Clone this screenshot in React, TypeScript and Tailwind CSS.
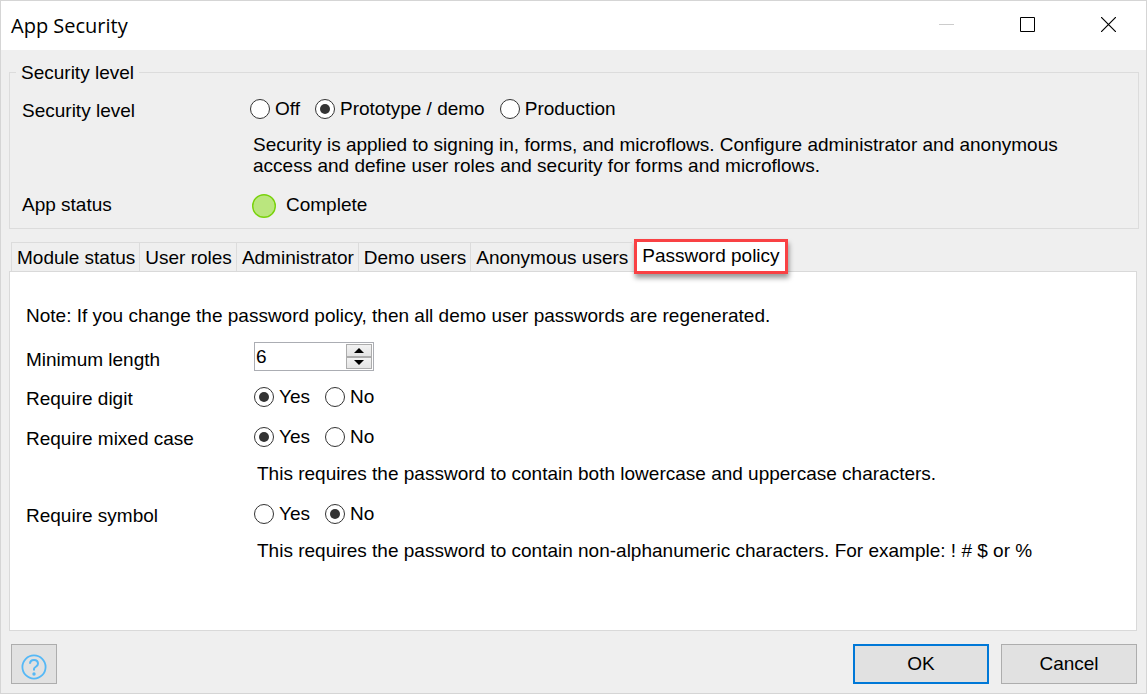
import { useState } from "react";
import type { ReactNode } from "react";

function Radio({ name, label, checked, onSelect }: { name: string; label: string; checked: boolean; onSelect: () => void }) {
  return (
    <label className="flex items-center gap-[5px]">
      <input
        type="radio"
        name={name}
        checked={checked}
        onChange={onSelect}
        className="grid size-5 shrink-0 appearance-none place-content-center rounded-full border border-[#333] bg-white before:size-2.5 before:rounded-full checked:before:bg-[#333]"
      />
      {label}
    </label>
  );
}

function RadioGroup({ name, label, options, initial }: { name: string; label: string; options: string[]; initial: string }) {
  const [value, setValue] = useState(initial);
  return (
    <div role="radiogroup" aria-label={label} className="flex h-[22px] items-center gap-[15px]">
      {options.map((o) => (
        <Radio key={o} name={name} label={o} checked={value === o} onSelect={() => setValue(o)} />
      ))}
    </div>
  );
}

function Row({ label, children, className = "" }: { label: ReactNode; children: ReactNode; className?: string }) {
  return (
    <div className={`grid grid-cols-[228px_minmax(0,1fr)] ${className}`}>
      <div className="pt-0.5">{label}</div>
      <div>{children}</div>
    </div>
  );
}

function LengthField() {
  const [value, setValue] = useState(6);
  const step = "flex flex-1 items-center justify-center border border-[#acacac] bg-linear-to-b from-[#f2f2f2] to-[#e4e4e4]";
  return (
    <div className="flex h-[29px] w-[120px] border border-[#abadb3] bg-white p-px">
      <input
        id="min-length"
        type="number"
        value={value}
        onChange={(e) => setValue(Number(e.target.value))}
        className="min-w-0 flex-1 appearance-none outline-none [-moz-appearance:textfield] [&::-webkit-inner-spin-button]:appearance-none"
      />
      <div className="flex w-[26px] flex-col">
        <button type="button" aria-label="Increase" className={step} onClick={() => setValue(value + 1)}>
          <svg width="10" height="5" viewBox="0 0 10 5"><path d="M0 5 5 0l5 5z" /></svg>
        </button>
        <button type="button" aria-label="Decrease" className={step} onClick={() => setValue(Math.max(0, value - 1))}>
          <svg width="10" height="5" viewBox="0 0 10 5"><path d="M0 0h10L5 5z" /></svg>
        </button>
      </div>
    </div>
  );
}

const tabs = ["Module status", "User roles", "Administrator", "Demo users", "Anonymous users"];
const caption = "flex h-8 w-16 items-center justify-center";

export default function App() {
  return (
    <div className="flex min-h-screen flex-col border border-[#d5d5d5] bg-[#efefef] font-['Liberation_Sans',Arial,sans-serif] text-[19px] leading-[22px] text-black">
      <header className="flex h-[49px] items-center justify-between bg-white pr-1.5 pl-2.5">
        <h1 className="font-['Open_Sans','Noto_Sans',sans-serif] text-[20px]">App Security</h1>
        <div className="mb-0.5 flex gap-[17px]">
          <button type="button" aria-label="Minimize" disabled className={caption}>
            <svg width="15" height="15" viewBox="0 0 15 15"><path d="M0 7.5h15" stroke="#ccc" /></svg>
          </button>
          <button type="button" aria-label="Maximize" className={caption}>
            <svg width="15" height="15" viewBox="0 0 15 15"><path d="M.5.5h14v14H.5z" fill="none" stroke="#000" /></svg>
          </button>
          <button type="button" aria-label="Close" className={caption}>
            <svg width="15" height="15" viewBox="0 0 15 15"><path d="m0 0 15 15M15 0 0 15" stroke="#000" strokeWidth="1.2" /></svg>
          </button>
        </div>
      </header>

      <main className="flex flex-1 flex-col pt-2.5 pr-[7px] pl-2">
        <fieldset className="border border-[#dcdcdc] px-3 pb-2.5">
          <legend className="-ml-1.5 px-[5px] pt-0.5">Security level</legend>
          <Row label="Security level" className="mt-3.5">
            <RadioGroup name="level" label="Security level" options={["Off", "Prototype / demo", "Production"]} initial="Prototype / demo" />
            <p className="mt-[14px] max-w-[840px] pl-[3px] leading-[21px]">
              Security is applied to signing in, forms, and microflows. Configure administrator and anonymous access and define user roles and security for forms and microflows.
            </p>
          </Row>
          <div className="mt-[18px] grid grid-cols-[228px_minmax(0,1fr)]">
            <div>App status</div>
            <div className="flex gap-2.5 pl-0.5">
              <svg width="24" height="24" viewBox="0 0 24 24"><circle cx="12" cy="12" r="11.3" fill="#bae67e" stroke="#79d20c" strokeWidth="1.4" /></svg>
              <span>Complete</span>
            </div>
          </div>
        </fieldset>

        <div role="tablist" className="mt-[13px] flex h-[29px] pl-0.5">
          {tabs.map((t) => (
            <button key={t} type="button" role="tab" aria-selected={false} className="border-t border-l border-[#dcdcdc] pt-0.5 pr-1 pl-[5px] whitespace-nowrap">
              {t}
            </button>
          ))}
          <button
            type="button"
            role="tab"
            aria-selected={true}
            className="z-10 -mt-[3px] ml-0.5 h-[35px] border-3 border-[#f94144] bg-white px-[5px] pb-0.5 whitespace-nowrap shadow-[1px_4px_5px_rgba(0,0,0,0.4)]"
          >
            Password policy
          </button>
        </div>

        <section role="tabpanel" aria-label="Password policy" className="mr-0.5 flex-1 border border-[#d9d9d9] bg-white px-4 pt-[33px]">
          <p>Note: If you change the password policy, then all demo user passwords are regenerated.</p>
          <Row label={<label htmlFor="min-length">Minimum length</label>} className="mt-[15px] items-end">
            <LengthField />
          </Row>
          <Row label="Require digit" className="mt-[15px]">
            <RadioGroup name="digit" label="Require digit" options={["Yes", "No"]} initial="Yes" />
          </Row>
          <Row label="Require mixed case" className="mt-4">
            <RadioGroup name="mixed" label="Require mixed case" options={["Yes", "No"]} initial="Yes" />
            <p className="mt-[15px] pl-[3px]">This requires the password to contain both lowercase and uppercase characters.</p>
          </Row>
          <Row label="Require symbol" className="mt-[18px]">
            <RadioGroup name="symbol" label="Require symbol" options={["Yes", "No"]} initial="No" />
            <p className="mt-[15px] pl-[3px]">This requires the password to contain non-alphanumeric characters. For example: ! # $ or %</p>
          </Row>
        </section>
      </main>

      <footer className="flex items-center gap-3 pt-[13px] pr-[9px] pb-[9px] pl-2.5">
        <button type="button" aria-label="Help" className="mr-auto flex h-10 w-[46px] items-center justify-center border border-[#adadad] bg-[#e1e1e1] pt-1.5">
          <svg width="26" height="26" viewBox="0 0 26 26" fill="none" stroke="#55b8f6" strokeWidth="1.8">
            <circle cx="13" cy="13" r="11.6" />
            <path d="M9 9.8c0-5.2 8-5.2 8 0 0 3-4 2.8-4 5.2v1.5" strokeWidth="2" />
            <circle cx="13" cy="20" r="1.7" fill="#55b8f6" stroke="none" />
          </svg>
        </button>
        <button type="button" className="h-10 w-[136px] border-2 border-[#0078d7] bg-[#e1e1e1]">OK</button>
        <button type="button" className="h-10 w-[136px] border border-[#adadad] bg-[#e1e1e1]">Cancel</button>
      </footer>
    </div>
  );
}
